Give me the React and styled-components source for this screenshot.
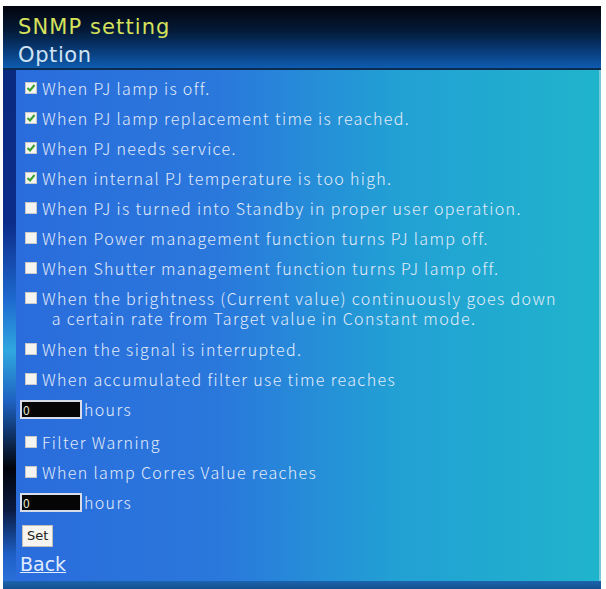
import React from "react";
import styled, { createGlobalStyle } from "styled-components";

const Global = createGlobalStyle`
  html, body { margin: 0; padding: 0; background: #ffffff; }
  body { font-family: "Noto Sans CJK JP", "DejaVu Sans", sans-serif; }
`;

const Frame = styled.div`
  margin: 6px 0 0 3px;
  width: 598px;
  height: 583px;
  display: flex;
  flex-direction: column;
  background: #1a5aa0;
`;

const Header = styled.div`
  height: 62px;
  padding: 0 0 0 15px;
  background: linear-gradient(180deg, #02040c 0%, #041a38 40%, #0a4488 80%, #0e5cb0 100%);
  border-bottom: 2px solid #0a2a50;
  display: flex;
  flex-direction: column;
  justify-content: flex-start;
`;

const Title = styled.div`
  color: ${(p) => p.$color};
  font-family: "DejaVu Sans", sans-serif;
  font-size: 21px;
  line-height: 24px;
  margin-top: ${(p) => p.$top}px;
  letter-spacing: ${(p) => p.$ls}px;
`;

const Body = styled.div`
  flex: 1;
  display: flex;
  min-height: 0;
`;

const LeftStrip = styled.div`
  width: 13px;
  background: linear-gradient(
    180deg,
    #0a2a80 0%,
    #0c2c8a 30%,
    #1e6ad0 45%,
    #30a8e0 55%,
    #1e60c0 65%,
    #02040a 78%,
    #0a1a40 86%,
    #1e60c8 95%,
    #2a70d8 100%
  );
`;

const Panel = styled.div`
  flex: 1;
  background: linear-gradient(90deg, #2a6cdc 0%, #2a78dc 35%, #22a0d4 65%, #20b4cc 100%);
  padding: 3px 0 0 0;
  color: #e4ecfa;
  font-family: "Noto Sans CJK JP", "DejaVu Sans", sans-serif;
  font-weight: 300;
  font-size: 16px;
  border-right: 2px solid #7cc8d8;
`;

const Footer = styled.div`
  height: 8px;
  background: linear-gradient(180deg, #1c64b0, #14508e);
`;

const Row = styled.div`
  display: flex;
  align-items: flex-start;
  padding: ${(p) => p.$pt ?? 5}px 0 ${(p) => p.$pb ?? 5}px ${(p) => p.$indent || 9}px;
  line-height: 20px;
`;

const Box = styled.span`
  flex: none;
  width: 12px;
  height: 12px;
  margin: 4px 5px 0 0;
  background: #f4f4f0;
  border: 1px solid #c8c8c8;
  box-sizing: border-box;
  display: flex;
  align-items: center;
  justify-content: center;
`;

const Label = styled.span`
  white-space: pre;
  letter-spacing: 1.35px;
`;

const Input = styled.span`
  width: 62px;
  height: 19px;
  background: #050505;
  border: 2px solid #d8dce8;
  box-sizing: border-box;
  color: #e8e8d0;
  font-size: 12px;
  font-weight: 400;
  line-height: 15px;
  padding-left: 1px;
  margin-right: 2px;
  margin-top: 1px;
`;

const Button = styled.span`
  padding: 0 4px;
  height: 20px;
  line-height: 20px;
  background: #f6f4ee;
  border: 1px solid #c0c0b8;
  color: #202020;
  font-size: 13px;
  font-weight: 400;
  font-family: "DejaVu Sans", sans-serif;
`;

const BackLink = styled.a`
  color: #e0ecff;
  font-size: 19px;
  font-weight: 400;
  font-family: "DejaVu Sans", sans-serif;
  text-decoration: underline;
`;

const Check = () => (
  <svg width="10" height="10" viewBox="0 0 10 10">
    <path d="M1.5 5 L4 7.5 L8.5 2" stroke="#3aa030" strokeWidth="2" fill="none" />
  </svg>
);

const items = [
  { t: "When PJ lamp is off.", c: true },
  { t: "When PJ lamp replacement time is reached.", c: true },
  { t: "When PJ needs service.", c: true },
  { t: "When internal PJ temperature is too high.", c: true },
  { t: "When PJ is turned into Standby in proper user operation.", c: false },
  { t: "When Power management function turns PJ lamp off.", c: false },
  { t: "When Shutter management function turns PJ lamp off.", c: false },
  {
    t: "When the brightness (Current value) continuously goes down\n  a certain rate from Target value in Constant mode.",
    c: false,
    pb: 6,
  },
  { t: "When the signal is interrupted.", c: false },
  { t: "When accumulated filter use time reaches", c: false },
];

const CheckRow = ({ t, c, pt, pb }) => (
  <Row $pt={pt} $pb={pb}>
    <Box>{c && <Check />}</Box>
    <Label>{t}</Label>
  </Row>
);

export default function App() {
  return (
    <>
      <Global />
      <Frame>
        <Header>
          <Title $color="#d6e25c" $top={9} $ls={1.1}>SNMP setting</Title>
          <Title $color="#cfe4f4" $top={4} $ls={0.6}>Option</Title>
        </Header>
        <Body>
          <LeftStrip />
          <Panel>
            {items.map((it, i) => (
              <CheckRow key={i} {...it} />
            ))}
            <Row $indent={4} $pb={8}>
              <Input>0</Input>
              <Label>hours</Label>
            </Row>
            <CheckRow t="Filter Warning" c={false} />
            <CheckRow t="When lamp Corres Value reaches" c={false} />
            <Row $indent={4} $pb={8}>
              <Input>0</Input>
              <Label>hours</Label>
            </Row>
            <Row $indent={6} $pb={5}>
              <Button>Set</Button>
            </Row>
            <Row $indent={4} $pt={2}>
              <BackLink href="#">Back</BackLink>
            </Row>
          </Panel>
        </Body>
        <Footer />
      </Frame>
    </>
  );
}
